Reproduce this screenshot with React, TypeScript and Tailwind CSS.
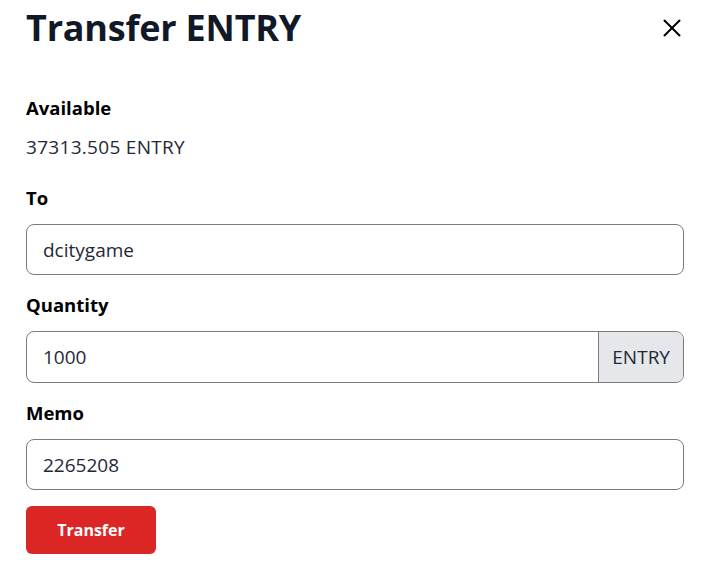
import React from 'react';
import { X } from 'lucide-react';

const App: React.FC = () => {
  return (
    <div className="w-[708px] h-[581px] bg-white text-[#111827] font-['Open_Sans','Lato',sans-serif]">
      <div className="pl-[26px] pr-[24px]">

        {/* Header */}
        <div className="flex items-start justify-between pt-[6px]">
          <h1 className="text-[36px] leading-[44px] font-bold tracking-[-0.2px]">Transfer ENTRY</h1>
          <button className="mt-[7px] mr-[-3px] text-black">
            <X size={30} strokeWidth={1.6} />
          </button>
        </div>

        {/* Available */}
        <div className="mt-[44px] text-[18.5px] leading-[27px] font-bold text-black">Available</div>
        <div className="mt-[13px] text-[19px] leading-[27px] tracking-[0.3px] text-[#1f2937]">37313.505 ENTRY</div>

        {/* To */}
        <label className="block mt-[23px] text-[18.5px] leading-[27px] font-bold text-black">To</label>
        <input
          defaultValue="dcitygame"
          className="mt-[13px] w-full h-[51px] border border-[#7b7b7b] rounded-[8px] px-[16px] text-[19px] text-[#1f2937] outline-none"
        />

        {/* Quantity */}
        <label className="block mt-[16px] text-[18.5px] leading-[27px] font-bold text-black">Quantity</label>
        <div className="mt-[13px] flex h-[52px] border border-[#7b7b7b] rounded-[8px] overflow-hidden">
          <input
            defaultValue="1000"
            className="flex-1 min-w-0 px-[16px] text-[19px] text-[#1f2937] outline-none"
          />
          <span className="flex items-center px-[13px] bg-[#e5e7eb] border-l border-[#7b7b7b] text-[19px] text-[#1f2937]">
            ENTRY
          </span>
        </div>

        {/* Memo */}
        <label className="block mt-[16px] text-[18.5px] leading-[27px] font-bold text-black">Memo</label>
        <input
          defaultValue="2265208"
          className="mt-[13px] w-full h-[51px] border border-[#7b7b7b] rounded-[8px] px-[16px] text-[19px] text-[#1f2937] outline-none"
        />

        {/* Submit */}
        <button className="mt-[16px] w-[130px] h-[48px] rounded-[6px] bg-[#dc2626] text-white text-[16px] font-bold">
          Transfer
        </button>

      </div>
    </div>
  );
};

export default App;
